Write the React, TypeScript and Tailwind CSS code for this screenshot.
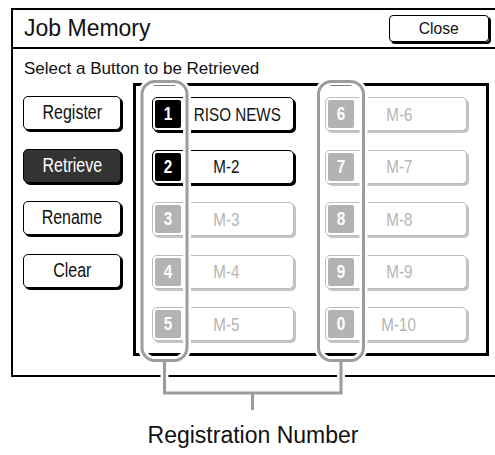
import React from "react";

type Slot = { n: string; name: string; active?: boolean; wide?: boolean };

const slots: Slot[] = [
  { n: "1", name: "RISO NEWS", active: true, wide: true },
  { n: "6", name: "M-6" },
  { n: "2", name: "M-2", active: true },
  { n: "7", name: "M-7" },
  { n: "3", name: "M-3" },
  { n: "8", name: "M-8" },
  { n: "4", name: "M-4" },
  { n: "9", name: "M-9" },
  { n: "5", name: "M-5" },
  { n: "0", name: "M-10" },
];

function SideButton({ label, dark }: { label: string; dark?: boolean }) {
  return (
    <div
      className={
        "h-[34px] w-[98px] rounded-[5px] border-[1.5px] border-black shadow-[2px_2px_0_#000] flex items-center justify-center " +
        (dark ? "bg-[#333333] text-white" : "bg-white text-[#111]")
      }
    >
      <span className="inline-block text-[19.5px] leading-none scale-x-[0.82]">{label}</span>
    </div>
  );
}

function SlotButton({ s }: { s: Slot }) {
  const a = !!s.active;
  return (
    <div
      className={
        "h-[34px] w-[142px] rounded-[5px] border-[1.5px] flex items-center bg-white " +
        (a ? "border-black shadow-[2px_2px_0_#000]" : "border-[#bdbdbd] shadow-[2px_2px_0_#c4c4c4]")
      }
    >
      <div
        className={
          "ml-[2px] h-[28px] w-[26px] rounded-[2px] flex items-center justify-center " +
          (a ? "bg-black" : "bg-[#b3b3b3]")
        }
      >
        <span className="inline-block text-white font-bold text-[18px] leading-none scale-x-[0.85]">{s.n}</span>
      </div>
      <div className={"flex-1 flex justify-center " + (s.wide ? "pr-0" : "pr-[22px]")}>
        <span
          className={
            "inline-block text-[19px] leading-none scale-x-[0.8] whitespace-nowrap " +
            (a ? "text-[#111]" : "text-[#b5b5b5]")
          }
        >
          {s.name}
        </span>
      </div>
    </div>
  );
}

export default function App() {
  return (
    <div className="relative w-[495px] h-[455px] overflow-hidden bg-white font-['Liberation_Sans',Arial,sans-serif] text-[#111]">
      <div className="ml-[11px] mt-[8px] w-[484px] h-[369px] border-l-2 border-t-2 border-b-2 border-black flex flex-col">
        <div className="h-[39px] border-b-2 border-black flex items-center justify-between pl-[11px] pr-[6px]">
          <span className="text-[23px] leading-none">Job Memory</span>
          <div className="h-[27px] w-[100px] rounded-[4px] border-[1.5px] border-black shadow-[2px_2px_0_#000] flex items-center justify-center">
            <span className="inline-block text-[17px] leading-none scale-x-[0.92]">Close</span>
          </div>
        </div>
        <div className="pl-[11px] pt-[10.5px] text-[17px] leading-none">Select a Button to be Retrieved</div>
        <div className="flex mt-[6.5px] pl-[10px]">
          <div className="w-[100px] pt-[13px] flex flex-col gap-[18.5px]">
            <SideButton label="Register" />
            <SideButton label="Retrieve" dark />
            <SideButton label="Rename" />
            <SideButton label="Clear" />
          </div>
          <div className="ml-[10px] w-[356px] h-[273px] border-[3px] border-black pl-[16px] pt-[11px]">
            <div className="grid grid-cols-[142px_142px] gap-x-[31px] gap-y-[18.5px]">
              {slots.map((s) => (
                <SlotButton key={s.n} s={s} />
              ))}
            </div>
          </div>
        </div>
      </div>
      <div className="flex justify-center pt-[47px] pl-[11px]">
        <span className="text-[23px] leading-none">Registration Number</span>
      </div>

      <svg className="absolute left-0 top-0 pointer-events-none" width="495" height="455" viewBox="0 0 495 455">
        <g fill="none" stroke="#ffffff" strokeWidth="8">
          <rect x="142" y="81.5" width="45" height="279" rx="13" />
          <rect x="318.5" y="81.5" width="45" height="279" rx="13" />
          <line x1="164.5" y1="362" x2="164.5" y2="392" />
          <line x1="341" y1="362" x2="341" y2="392" />
        </g>
        <g fill="none" stroke="#9c9c9c" strokeWidth="3">
          <rect x="142" y="81.5" width="45" height="279" rx="13" />
          <rect x="318.5" y="81.5" width="45" height="279" rx="13" />
          <polyline points="164.5,361 164.5,393 341,393 341,361" />
          <line x1="252.5" y1="393" x2="252.5" y2="410" />
        </g>
      </svg>
    </div>
  );
}
